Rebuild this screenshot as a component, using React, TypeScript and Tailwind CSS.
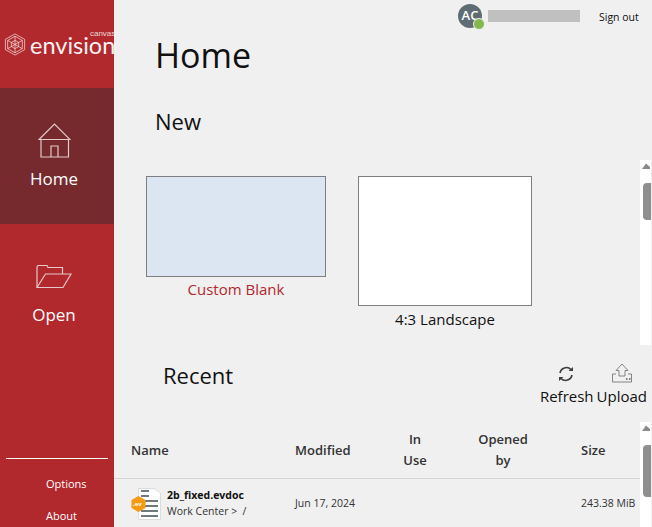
import React from "react";

const font = { fontFamily: '"Open Sans", "Noto Sans", sans-serif' };

function Logo() {
  return (
    <svg width="22" height="25" viewBox="0 0 24 25" fill="none" stroke="#f3dede" strokeWidth="0.8" className="shrink-0">
      <path d="M12 1 L22.5 6.8 V18.2 L12 24 L1.5 18.2 V6.8 Z" />
      <path d="M12 3.5 L20 8 V17 L12 21.5 L4 17 V8 Z" />
      <path d="M12 3.5 V21.5 M4 8 L20 17 M20 8 L4 17" />
      <path d="M12 8 L16 10.2 V14.8 L12 17 L8 14.8 V10.2 Z" />
    </svg>
  );
}

function Scrollbar({ thumbHeight, className }: { thumbHeight: string; className: string }) {
  return (
    <div className={`w-[11px] shrink-0 bg-white flex flex-col items-stretch ${className}`}>
      <svg width="11" height="8" viewBox="0 0 11 8" className="shrink-0 mt-[2px]">
        <path d="M2 7 L6 1.5 L10 5 V7 Z" fill="#8a8a8a" />
      </svg>
      <div className={`${thumbHeight} ml-[3px] bg-[#8f8f8f] rounded-l-[4px]`} />
    </div>
  );
}

export default function App() {
  return (
    <div style={font} className="w-[652px] h-[527px] overflow-hidden flex bg-[#f0f0f0] text-[#111]">
      <aside className="w-[114px] shrink-0 bg-[#b1282d] flex flex-col text-white">
        <div className="h-[88px] flex items-center pl-[4px] shrink-0 overflow-hidden">
          <div className="flex items-center gap-[4px] mt-[1px]">
            <Logo />
            <div className="relative">
              <span className="block text-[23.5px] leading-[14px] text-[#fbf3f3] whitespace-nowrap" style={{ fontFamily: 'Lato, sans-serif' }}>envision</span>
              <span className="absolute right-0 -top-[8px] text-[8px] leading-[8px] text-[#f0d8d8]" style={{ fontFamily: '"Liberation Sans", sans-serif' }}>canvas</span>
            </div>
          </div>
        </div>
        <div className="h-[136px] bg-[#772a2d] flex flex-col items-center pt-[35px] pr-[6px] shrink-0">
          <svg width="33" height="35" viewBox="0 0 33 35" fill="none" stroke="#e2c9ca" strokeWidth="1.2">
            <path d="M1 16.5 L16.5 1 L32 16.5 Z" />
            <path d="M3 16.5 V34 H30.5 V16.5" />
            <path d="M13 34 V23 H20 V34" />
          </svg>
          <span className="text-[17px] leading-[24px] mt-[9px]">Home</span>
        </div>
        <div className="h-[136px] flex flex-col items-center pt-[40px] pr-[6px] shrink-0">
          <svg width="36" height="26" viewBox="0 0 36 26" fill="none" stroke="#e6c8ca" strokeWidth="1.2">
            <path d="M1 23.5 V3 L2 1.5 H11 L12 3.5 H26.5 V10" />
            <path d="M1 23.5 L9.5 10 H35 L27 23.5 Z" />
          </svg>
          <span className="text-[17px] leading-[24px] mt-[13px]">Open</span>
        </div>
        <div className="flex-1" />
        <div className="mx-[6px] h-px bg-white shrink-0" />
        <div className="pl-[46px] pt-[17px] pb-[3px] text-[11px] leading-[16px] shrink-0">
          <div>Options</div>
          <div className="mt-[16px]">About</div>
        </div>
      </aside>

      <main className="flex-1 min-w-0 flex flex-col">
        <div className="h-[30px] shrink-0 flex items-center pl-[344px] pt-[2px]">
          <div className="relative w-6 h-6 rounded-full bg-[#5f6c73] text-white text-[13px] font-semibold flex items-center justify-center shrink-0">
            AC
            <span className="absolute right-[-3px] bottom-[-2px] w-[12px] h-[12px] rounded-full bg-[#84b84c] border border-[#f0f0f0]" />
          </div>
          <div className="w-[92px] h-[12px] bg-[#c0c0c0] ml-[6px] shrink-0" />
          <span className="ml-[19px] text-[10.5px] leading-[16px] mt-[1px] whitespace-nowrap">Sign out</span>
        </div>

        <h1 className="pl-[41px] text-[34px] leading-[44px] mt-[3px] shrink-0">Home</h1>
        <h2 className="pl-[41px] text-[22px] leading-[30px] mt-[29px] shrink-0">New</h2>

        <div className="flex h-[185px] mt-[24px] shrink-0">
          <div className="flex-1 flex items-start gap-[32px] pl-[32px] pt-[16px]">
            <div className="w-[180px] flex flex-col items-center">
              <div className="w-[180px] h-[101px] bg-[#dce6f2] border border-[#7f7f7f]" />
              <span className="text-[15px] leading-[24px] text-[#b1282d]">Custom Blank</span>
            </div>
            <div className="w-[174px] flex flex-col items-center">
              <div className="w-[174px] h-[130px] bg-white border border-[#7f7f7f]" />
              <span className="text-[15px] leading-[26px]">4:3 Landscape</span>
            </div>
          </div>
          <Scrollbar thumbHeight="h-[37px] mt-[13px]" className="mr-px" />
        </div>

        <div className="flex items-start h-[77px] shrink-0">
          <h2 className="pl-[49px] text-[22px] leading-[30px] mt-[15px] flex-1">Recent</h2>
          <div className="flex gap-[3px] pr-[5px] text-[15px] leading-[20px] mt-[20px]">
            <div className="flex flex-col items-center">
              <svg width="18" height="18" viewBox="0 0 18 18" fill="none" stroke="#3d3d3d" strokeWidth="1.6" className="-translate-x-[1px]">
                <path d="M3 8 A6.5 6.5 0 0 1 14 4.5" />
                <path d="M15 10 A6.5 6.5 0 0 1 4 13.5" />
                <path d="M11.5 6 H16 V2 Z" fill="#3d3d3d" stroke="none" />
                <path d="M6.5 12 H2 V16 Z" fill="#3d3d3d" stroke="none" />
              </svg>
              <span className="mt-[3px]">Refresh</span>
            </div>
            <div className="flex flex-col items-center">
              <svg width="22" height="20" viewBox="0 0 22 20" fill="none" stroke="#777" strokeWidth="0.9" className="-mt-[2px]">
                <path d="M11 1 L17 7.5 H14 V13 H8 V7.5 H5 Z" />
                <path d="M5 11 H1.5 V19 H20.5 V11 H17" />
                <path d="M15 16 H16.5 M18 16 H19.5" strokeWidth="1.6" stroke="#555" />
              </svg>
              <span className="mt-[3px]">Upload</span>
            </div>
          </div>
        </div>

        <div className="flex flex-1 min-h-0">
          <div className="flex-1 min-w-0">
            <div className="h-[57px] flex items-center border-b border-[#d5d5d5] text-[13px] font-semibold text-[#333] leading-[21px]">
              <span className="w-[181px] pl-[17px]">Name</span>
              <span className="w-[95px]">Modified</span>
              <span className="w-[76px] text-center pr-[26px]">In<br />Use</span>
              <span className="w-[115px] text-center pr-[41px]">Opened<br />by</span>
              <span>Size</span>
            </div>
            <div className="h-[49px] flex items-center">
              <div className="w-[181px] flex items-center pl-[17px]">
                <div className="relative w-[30px] h-[32px] shrink-0">
                  <svg width="30" height="32" viewBox="0 0 30 32">
                    <path d="M7.5 0.5 H23 L29.5 5 V31.5 H7.5 Z" fill="#fff" stroke="#dcdcdc" />
                    <path d="M10 3 H18 M10 8 H18 M10 13 H27 M10 18 H27 M10 23 H27 M10 28 H27" stroke="#6f7a80" strokeWidth="2" />
                    <path d="M7.5 8 L14.5 12 V20 L7.5 24 L0.5 20 V12 Z" fill="#f59a13" />
                  </svg>
                  <span className="absolute left-[2px] top-[12px] text-[6px] font-bold text-white leading-[8px]">.ev</span>
                </div>
                <div className="ml-[6px]">
                  <div className="text-[10.5px] font-bold leading-[15px] text-[#111] whitespace-nowrap">2b_fixed.evdoc</div>
                  <div className="text-[10.5px] leading-[17px] text-[#333] whitespace-nowrap">Work Center &gt; &nbsp;/</div>
                </div>
              </div>
              <span className="w-[95px] text-[10.5px] text-[#333] whitespace-nowrap">Jun 17, 2024</span>
              <span className="w-[191px]" />
              <span className="text-[10.5px] text-[#333] whitespace-nowrap">243.38 MiB</span>
            </div>
          </div>
          <Scrollbar thumbHeight="h-[52px] mt-[13px]" className="mr-px" />
        </div>
      </main>
    </div>
  );
}
